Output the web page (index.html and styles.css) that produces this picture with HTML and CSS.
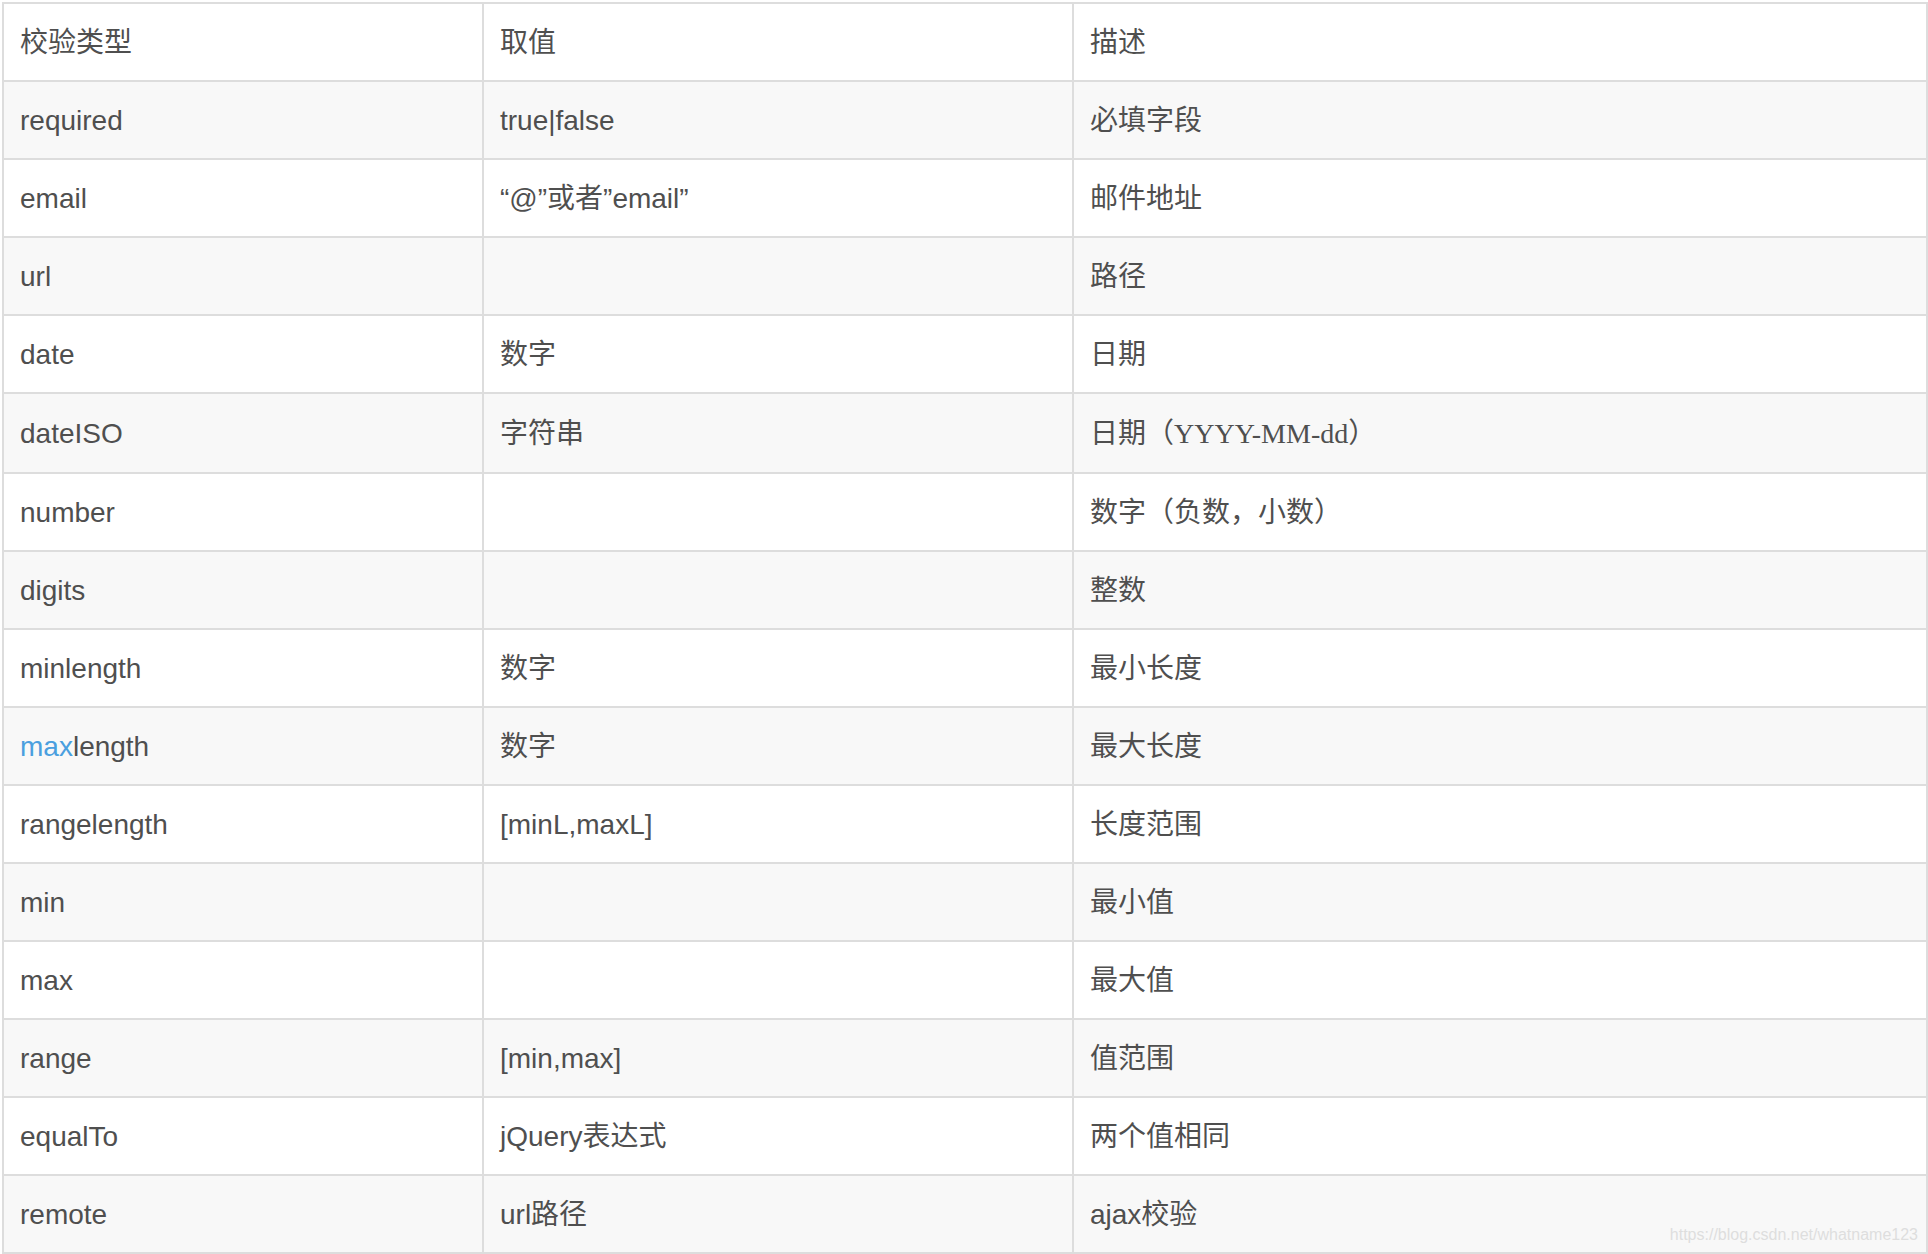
FILE: index.html
```html
<!DOCTYPE html>
<html lang="zh">
<head>
<meta charset="utf-8">
<link rel="stylesheet" href="styles.css">
</head>
<body>
<div class="wrap">
<table class="rules">
<colgroup><col class="c1"><col class="c2"><col class="c3"></colgroup>
<tr><td>校验类型</td><td>取值</td><td>描述</td></tr>
<tr><td>required</td><td>true|false</td><td>必填字段</td></tr>
<tr><td>email</td><td>“@”或者”email”</td><td>邮件地址</td></tr>
<tr><td>url</td><td></td><td>路径</td></tr>
<tr><td>date</td><td>数字</td><td>日期</td></tr>
<tr class="tall"><td>dateISO</td><td>字符串</td><td>日期（<span class="serif">YYYY-MM-dd</span>）</td></tr>
<tr><td>number</td><td></td><td>数字（负数，小数）</td></tr>
<tr><td>digits</td><td></td><td>整数</td></tr>
<tr><td>minlength</td><td>数字</td><td>最小长度</td></tr>
<tr><td><span class="link">max</span>length</td><td>数字</td><td>最大长度</td></tr>
<tr><td>rangelength</td><td>[minL,maxL]</td><td>长度范围</td></tr>
<tr><td>min</td><td></td><td>最小值</td></tr>
<tr><td>max</td><td></td><td>最大值</td></tr>
<tr><td>range</td><td>[min,max]</td><td>值范围</td></tr>
<tr><td>equalTo</td><td>jQuery表达式</td><td>两个值相同</td></tr>
<tr><td>remote</td><td>url路径</td><td>ajax校验</td></tr>
</table>
<div class="watermark">https://blog.csdn.net/whatname123</div>
</div>
</body>
</html>
```
FILE: styles.css
```css
html, body {
  margin: 0;
  padding: 0;
  background: #ffffff;
}
.wrap {
  position: relative;
  padding: 2px 0 0 2px;
  width: 1924px;
}
.rules {
  border-collapse: collapse;
  table-layout: fixed;
  width: 1924px;
  font-family: "Liberation Sans", "Noto Sans CJK SC", sans-serif;
  font-size: 28px;
  color: #4f4f4f;
}
.c1 { width: 480px; }
.c2 { width: 590px; }
.c3 { width: 854px; }
.rules td {
  border: 2px solid #dddddd;
  height: 74px;
  padding: 2px 16px 0;
  line-height: 32px;
  vertical-align: middle;
  white-space: nowrap;
}
.rules tr.tall td {
  height: 76px;
}
.rules tr:nth-child(even) td {
  background: #f8f8f8;
}
.serif {
  font-family: "Liberation Serif", serif;
}
.link {
  color: #4a9fdf;
}
.watermark {
  position: absolute;
  right: 8px;
  bottom: 10px;
  font-family: "Liberation Sans", sans-serif;
  font-size: 16px;
  color: #dedede;
}
```
